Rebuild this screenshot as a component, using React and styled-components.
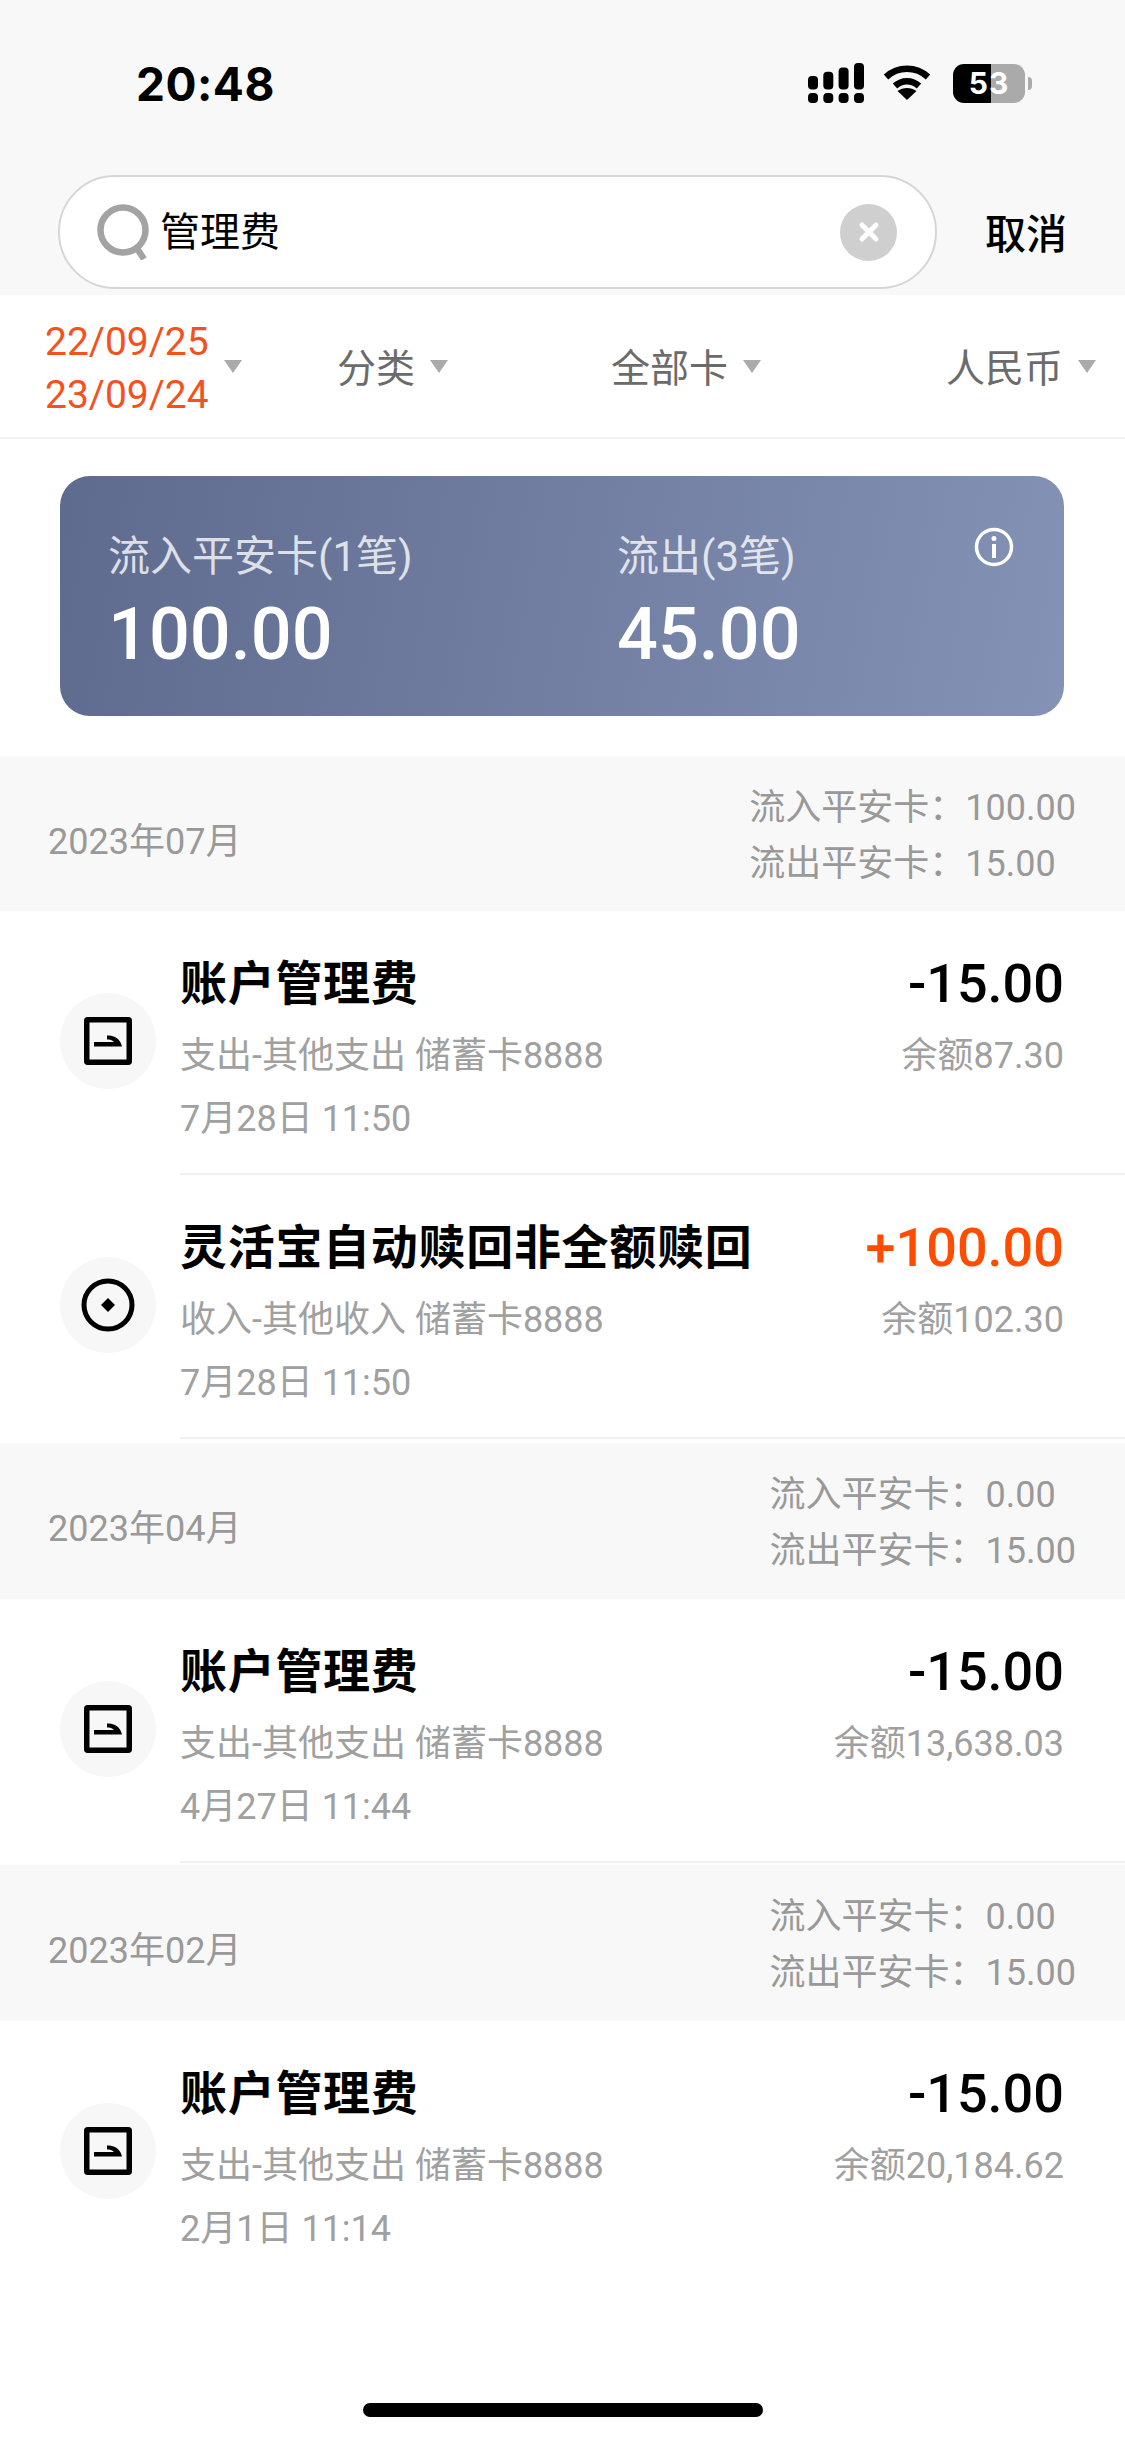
import React from 'react'
import styled, { createGlobalStyle } from 'styled-components'

const Global = createGlobalStyle`
  html, body { margin: 0; padding: 0; background: #fff; }
  * { box-sizing: border-box; }
  body { font-family: Roboto, "Noto Sans CJK SC", sans-serif; }
`

const Page = styled.div`
  width: 1125px;
  height: 2439px;
  background: #fff;
  overflow: hidden;
  position: relative;
`

const Top = styled.div`
  background: #f8f8f8;
  height: 295px;
  padding: 0 58px;
`

const StatusBar = styled.div`
  height: 175px;
  display: flex;
  justify-content: space-between;
  padding: 59px 42px 0 78px;
  align-items: flex-start;
`

const Clock = styled.div`
  font-family: Inter, sans-serif;
  font-weight: 700;
  font-size: 46px;
  line-height: 50px;
  color: #000;
  letter-spacing: 0.5px;
`

const StatusIcons = styled.div`
  display: flex;
  align-items: center;
  gap: 19px;
  height: 44px;
  margin-top: 2px;
`

const Battery = styled.div`
  position: relative;
  width: 72px;
  height: 39px;
  margin-left: 3px;
  border-radius: 11px;
  background: linear-gradient(90deg, #000 0 53%, #aaa 53% 100%);
  color: #fff;
  font-family: Inter, sans-serif;
  font-weight: 700;
  font-size: 30px;
  line-height: 39px;
  text-align: center;
  letter-spacing: 1px;
  &::after {
    content: '';
    position: absolute;
    left: 75px;
    top: 13px;
    width: 4px;
    height: 13px;
    border-radius: 0 4px 4px 0;
    background: #aaa;
  }
`

const SearchRow = styled.div`
  display: flex;
  align-items: center;
  height: 114px;
`

const SearchBox = styled.div`
  width: 879px;
  height: 114px;
  border: 2px solid #d6d6d6;
  border-radius: 57px;
  background: #fff;
  display: flex;
  align-items: center;
  padding: 0 38px 0 36px;
`

const Query = styled.div`
  flex: 1;
  margin: 2px 0 0 8px;
  font-size: 40px;
  color: #000;
  line-height: 50px;
`

const Cancel = styled.div`
  margin: -2px 0 0 48px;
  font-size: 41px;
  font-weight: 500;
  color: #000;
  white-space: nowrap;
`

const ClearBtn = styled.div`
  width: 57px;
  height: 57px;
  border-radius: 50%;
  background: #cfcfcf;
  display: flex;
  align-items: center;
  justify-content: center;
`

const Filters = styled.div`
  height: 144px;
  border-bottom: 2px solid #f2f2f2;
  display: grid;
  grid-template-columns: 292px 274px 335px auto;
  padding-left: 45px;
  align-items: center;
`

const Filter = styled.div`
  display: flex;
  align-items: center;
  gap: 15px;
  font-size: 39px;
  color: #6b6b6b;
  margin-top: -2px;
`

const Dates = styled.div`
  color: #f4511e;
  font-size: 39px;
  line-height: 53px;
  margin-top: 8px;
`

const Caret = styled.span`
  width: 0;
  height: 0;
  border-left: 9.5px solid transparent;
  border-right: 9.5px solid transparent;
  border-top: 13px solid #aaa;
  margin-top: 3px;
`

const Summary = styled.div`
  margin: 37px 61px 41px 60px;
  height: 240px;
  border-radius: 30px;
  background: linear-gradient(100deg, #5e6b8e 0%, #8492b6 100%);
  position: relative;
  display: flex;
  padding: 55px 0 0 48px;
`

const SumCol = styled.div`
  width: ${p => p.$w}px;
`

const SumLabel = styled.div`
  font-size: 42px;
  line-height: 52px;
  color: rgba(255, 255, 255, 0.78);
`

const SumValue = styled.div`
  font-size: 72px;
  font-weight: 500;
  line-height: 84px;
  color: #fff;
  margin-top: 10px;
`

const InfoIcon = styled.svg`
  position: absolute;
  right: 50px;
  top: 51px;
`

const GroupHead = styled.div`
  height: ${p => p.$h}px;
  background: #f8f8f8;
  display: flex;
  justify-content: space-between;
  align-items: center;
  padding: 0 49px 0 48px;
  color: #999;
  font-size: 36px;
`

const Month = styled.span`
  margin-top: 7px;
`

const GroupTotals = styled.div`
  display: grid;
  grid-template-columns: max-content max-content;
  line-height: 56px;
  font-size: 36px;
  margin-top: 4px;
`

const Row = styled.div`
  height: 264px;
  margin-bottom: ${p => p.$gap || 0}px;
  display: flex;
  align-items: flex-start;
  padding-left: 60px;
`

const IconCircle = styled.div`
  width: 96px;
  height: 96px;
  margin-top: 82px;
  border-radius: 50%;
  background: #f7f7f7;
  display: flex;
  align-items: center;
  justify-content: center;
  flex: none;
`

const RowBody = styled.div`
  flex: 1;
  align-self: stretch;
  margin-left: 24px;
  padding: 42px 61px 0 0;
  border-bottom: ${p => (p.$line ? '2px solid #f0f0f0' : 'none')};
  display: flex;
  justify-content: space-between;
`

const Title = styled.div`
  font-size: 47px;
  font-weight: 700;
  line-height: 62px;
  color: #000;
  letter-spacing: 0.7px;
  white-space: nowrap;
`

const Sub = styled.div`
  font-size: 36px;
  line-height: 50px;
  color: #a0a0a0;
  margin-top: ${p => p.$mt || 0}px;
  white-space: nowrap;
`

const Right = styled.div`
  text-align: right;
`

const Amount = styled.div`
  font-size: 54px;
  font-weight: 500;
  line-height: 62px;
  color: ${p => (p.$plus ? '#ff4d00' : '#000')};
`

const HomeBar = styled.div`
  position: absolute;
  left: 363px;
  bottom: 22px;
  width: 400px;
  height: 14px;
  border-radius: 7px;
  background: #000;
`

const Signal = () => (
  <svg width="56" height="40" viewBox="0 0 56 40">
    {[0, 15.3, 30.6, 46].map((x, i) => (
      <rect key={x} x={x} y={13 - i * 4.3} width="10" height={13.5 + i * 4.3} rx="4" />
    ))}
    {[0, 15.3, 30.6, 46].map(x => (
      <rect key={x} x={x} y="30" width="10" height="10" rx="4" />
    ))}
  </svg>
)

const Wifi = () => (
  <svg width="48" height="36" viewBox="0 0 48 36" fill="none" stroke="#000" strokeWidth="6.5">
    <path d="M3 12 C15 1 33 1 45 12" />
    <path d="M12 21 C19 14.5 29 14.5 36 21" />
    <path d="M24 35 L14.5 26 C20 22 28 22 33.5 26 Z" fill="#000" stroke="none" />
  </svg>
)

const SearchIcon = () => (
  <svg width="56" height="56" viewBox="0 0 56 56" fill="none" stroke="#a3a3a3">
    <circle cx="27" cy="26" r="22.5" strokeWidth="6.5" />
    <path d="M40 43 L48 55" strokeWidth="6.5" />
  </svg>
)

const OutIcon = () => (
  <svg width="48" height="48" viewBox="0 0 48 48">
    <rect x="2.75" y="2.75" width="42.5" height="42.5" rx="1" fill="none" stroke="#000" strokeWidth="5.5" />
    <path d="M10 25 H30 C28 23 26 22.5 23 22.5 V18.5 C30 18.5 36 21 38 29.5 H10 Z" fill="#000" />
  </svg>
)

const InIcon = () => (
  <svg width="54" height="54" viewBox="0 0 54 54" fill="none">
    <circle cx="27" cy="27" r="24" stroke="#000" strokeWidth="5" />
    <path d="M27 20 L34 27 L27 34 L20 27 Z" fill="#000" />
  </svg>
)

const Record = ({ title, sub, time, amount, balance, plus, line, gap, icon }) => (
  <Row $gap={gap}>
    <IconCircle>{icon === 'in' ? <InIcon /> : <OutIcon />}</IconCircle>
    <RowBody $line={line}>
      <div>
        <Title>{title}</Title>
        <Sub $mt={16}>{sub}</Sub>
        <Sub $mt={13}>{time}</Sub>
      </div>
      <Right>
        <Amount $plus={plus}>{amount}</Amount>
        <Sub $mt={16}>{balance}</Sub>
      </Right>
    </RowBody>
  </Row>
)

const Group = ({ month, inflow, outflow, h }) => (
  <GroupHead $h={h}>
    <Month>{month}</Month>
    <GroupTotals>
      <span>流入平安卡：</span>
      <span>{inflow}</span>
      <span>流出平安卡：</span>
      <span>{outflow}</span>
    </GroupTotals>
  </GroupHead>
)

export default function App() {
  return (
    <Page>
      <Global />
      <Top>
        <StatusBar>
          <Clock>20:48</Clock>
          <StatusIcons>
            <Signal />
            <Wifi />
            <Battery>53</Battery>
          </StatusIcons>
        </StatusBar>
        <SearchRow>
          <SearchBox>
            <SearchIcon />
            <Query>管理费</Query>
            <ClearBtn>
              <svg width="24" height="24" viewBox="0 0 24 24" stroke="#fff" strokeWidth="5" strokeLinecap="round">
                <path d="M5 5 L19 19 M19 5 L5 19" />
              </svg>
            </ClearBtn>
          </SearchBox>
          <Cancel>取消</Cancel>
        </SearchRow>
      </Top>
      <Filters>
        <Filter>
          <Dates>
            <div>22/09/25</div>
            <div>23/09/24</div>
          </Dates>
          <Caret />
        </Filter>
        <Filter>分类<Caret /></Filter>
        <Filter>全部卡<Caret /></Filter>
        <Filter>人民币<Caret /></Filter>
      </Filters>
      <Summary>
        <SumCol $w={509}>
          <SumLabel>流入平安卡(1笔)</SumLabel>
          <SumValue>100.00</SumValue>
        </SumCol>
        <SumCol $w={300}>
          <SumLabel>流出(3笔)</SumLabel>
          <SumValue>45.00</SumValue>
        </SumCol>
        <InfoIcon width="40" height="40" viewBox="0 0 40 40" fill="none" stroke="#fff">
          <circle cx="20" cy="20" r="17.5" strokeWidth="3.5" />
          <path d="M20 17 V31" strokeWidth="4" />
          <circle cx="20" cy="11.5" r="2.5" fill="#fff" stroke="none" />
        </InfoIcon>
      </Summary>
      <Group month="2023年07月" inflow="100.00" outflow="15.00" h={154} />
      <Record line title="账户管理费" sub="支出-其他支出 储蓄卡8888" time="7月28日 11:50" amount="-15.00" balance="余额87.30" />
      <Record line gap={4} icon="in" plus title="灵活宝自动赎回非全额赎回" sub="收入-其他收入 储蓄卡8888" time="7月28日 11:50" amount="+100.00" balance="余额102.30" />
      <Group month="2023年04月" inflow="0.00" outflow="15.00" h={156} />
      <Record line gap={2} title="账户管理费" sub="支出-其他支出 储蓄卡8888" time="4月27日 11:44" amount="-15.00" balance="余额13,638.03" />
      <Group month="2023年02月" inflow="0.00" outflow="15.00" h={156} />
      <Record title="账户管理费" sub="支出-其他支出 储蓄卡8888" time="2月1日 11:14" amount="-15.00" balance="余额20,184.62" />
      <HomeBar />
    </Page>
  )
}
